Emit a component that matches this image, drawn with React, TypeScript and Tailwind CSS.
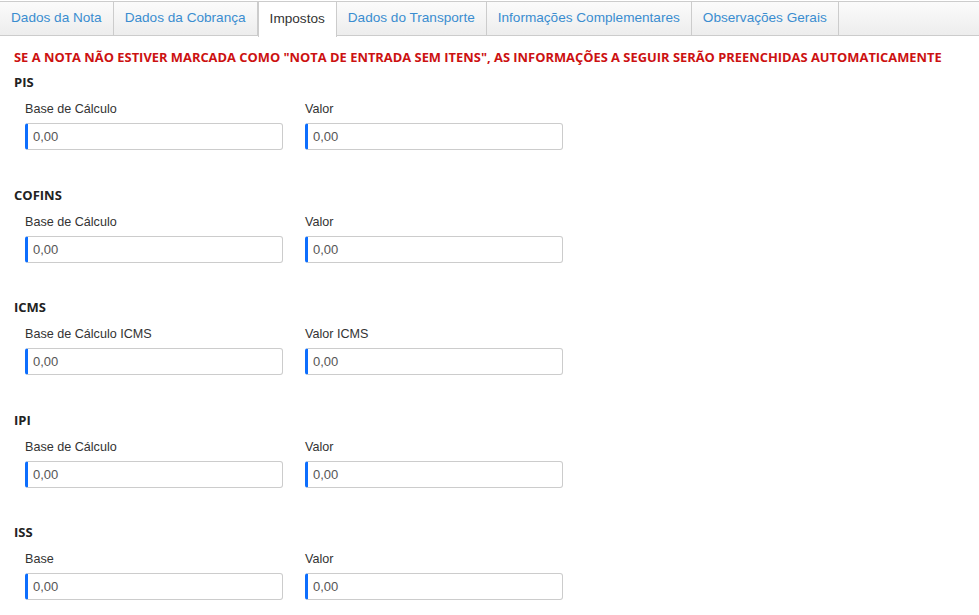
import React from 'react';

const tabs = [
  'Dados da Nota',
  'Dados da Cobrança',
  'Impostos',
  'Dados do Transporte',
  'Informações Complementares',
  'Observações Gerais',
];

const sections = [
  { title: 'PIS', left: 'Base de Cálculo', right: 'Valor' },
  { title: 'COFINS', left: 'Base de Cálculo', right: 'Valor' },
  { title: 'ICMS', left: 'Base de Cálculo ICMS', right: 'Valor ICMS' },
  { title: 'IPI', left: 'Base de Cálculo', right: 'Valor' },
  { title: 'ISS', left: 'Base', right: 'Valor' },
];

const Field = ({ label }: { label: string }) => (
  <div className="flex w-[258px] flex-col">
    <label className="h-5 text-[12.6px] leading-5 text-[#333]">{label}</label>
    <input
      readOnly
      value="0,00"
      className="mt-[4px] h-[27px] w-full rounded-[3px] border border-l-[3px] border-[#ccc] border-l-[#0d6efd] bg-white pl-[5px] text-[13px] text-[#555] outline-none"
    />
  </div>
);

export default function App() {
  const active = 'Impostos';

  return (
    <div className="min-h-[615px] bg-white pt-px font-['Liberation_Sans',Arial,sans-serif]">
      {/* tab strip */}
      <div className="flex h-[35px] border-y border-[#ccc] bg-gradient-to-b from-[#fbfbfb] to-[#ededed]">
        {tabs.map((t) => (
          <div
            key={t}
            className={
              t === active
                ? '-mb-px flex h-[35px] items-center border-r border-l border-[#ccc] bg-white px-[11px] text-[13.6px] text-[#333]'
                : 'flex items-center border-r border-[#ccc] px-[11px] text-[13.6px] text-[#3a8dd0]'
            }
          >
            {t}
          </div>
        ))}
      </div>

      <div className="px-[14px] pt-[11px] font-['Open_Sans',sans-serif]">
        <p className="h-5 whitespace-nowrap text-[12.9px] font-bold leading-5 text-[#cc1111]">
          SE A NOTA NÃO ESTIVER MARCADA COMO "NOTA DE ENTRADA SEM ITENS", AS INFORMAÇÕES A SEGUIR SERÃO PREENCHIDAS AUTOMATICAMENTE
        </p>

        <div className="mt-[5px] flex flex-col gap-[34.5px]">
          {sections.map((s) => (
            <div key={s.title} className="flex flex-col">
              <h3 className="h-5 text-[13px] font-bold leading-5 text-[#222]">{s.title}</h3>
              <div className="mt-[7px] flex gap-[22px] pl-[11px] font-['Liberation_Sans',Arial,sans-serif]">
                <Field label={s.left} />
                <Field label={s.right} />
              </div>
            </div>
          ))}
        </div>
      </div>
    </div>
  );
}
